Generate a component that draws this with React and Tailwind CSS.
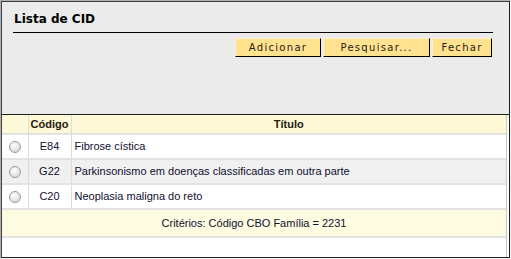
const rows = [
  { code: 'E84', title: 'Fibrose cística', bg: 'bg-white' },
  { code: 'G22', title: 'Parkinsonismo em doenças classificadas em outra parte', bg: 'bg-[#f0f0f0]' },
  { code: 'C20', title: 'Neoplasia maligna do reto', bg: 'bg-white' },
];

const Radio = () => (
  <span className="block w-[12px] h-[12px] rounded-full border border-[#9c9c9c] bg-[radial-gradient(circle_at_40%_35%,#ffffff,#cfcfcf)] mx-auto" />
);

const Button = ({ children, w }) => (
  <button
    className={`h-[19px] ${w} bg-[#ffe28f] border border-t-[#fff4c8] border-l-[#fff4c8] border-r-black border-b-black text-[10px] tracking-[1.3px] text-[#2a1a10] leading-none`}
    style={{ fontFamily: 'Verdana, "DejaVu Sans", sans-serif' }}
  >
    {children}
  </button>
);

export default function App() {
  return (
    <div className="w-[511px] h-[259px] border border-t-[#b0b0b0] border-l-[#b0b0b0] border-r-[#f4f4f4] border-b-[#f4f4f4]">
      <div className="w-full h-full flex flex-col bg-[#ebebeb] border border-t-[#404040] border-l-[#404040] border-r-[#202020] border-b-[#202020]">
        <div className="pl-[11px] pr-[16px] pt-[9px] h-[112px]">
          <div
            className="border-b border-black pb-[5px] text-[12px] font-bold text-black leading-[16px] pl-px"
            style={{ fontFamily: 'Verdana, "DejaVu Sans", sans-serif' }}
          >
            Lista de CID
          </div>
          <div className="flex justify-end gap-[2px] mt-[5px] pr-px">
            <Button w="w-[86px]">Adicionar</Button>
            <Button w="w-[107px]">Pesquisar...</Button>
            <Button w="w-[60px]">Fechar</Button>
          </div>
        </div>
        <div
          className="flex-1 bg-white border-t border-[#202020] pr-[2px] text-[11px]"
          style={{ fontFamily: '"Liberation Sans", Arial, sans-serif' }}
        >
          <div className="border-r border-[#c8c8c8] h-full">
            <table className="w-full border-collapse">
              <thead>
                <tr className="bg-[#fdf8d6] h-[19px] text-[#2a1a10] font-bold">
                  <th className="w-[26px] border-r border-[#dcdcdc] border-b-2 border-b-[#e2e2e2]" />
                  <th className="w-[43px] border-r border-[#dcdcdc] border-b-2 border-b-[#e2e2e2] font-bold">Código</th>
                  <th className="border-b-2 border-b-[#e2e2e2] font-bold">Título</th>
                </tr>
              </thead>
              <tbody className="text-[#101030]">
                {rows.map((r) => (
                  <tr key={r.code} className={`${r.bg} h-[25px]`}>
                    <td className="border-r border-[#dcdcdc] border-b-2 border-b-[#e2e2e2]"><Radio /></td>
                    <td className="border-r border-[#dcdcdc] border-b-2 border-b-[#e2e2e2] text-center">{r.code}</td>
                    <td className="border-b-2 border-b-[#e2e2e2] pl-[3px]">{r.title}</td>
                  </tr>
                ))}
                <tr className="bg-[#fdfbe0] h-[28px]">
                  <td colSpan={3} className="text-center border-b-2 border-b-[#e2e2e2]">
                    Critérios: Código CBO Família = 2231
                  </td>
                </tr>
              </tbody>
            </table>
          </div>
        </div>
      </div>
    </div>
  );
}
